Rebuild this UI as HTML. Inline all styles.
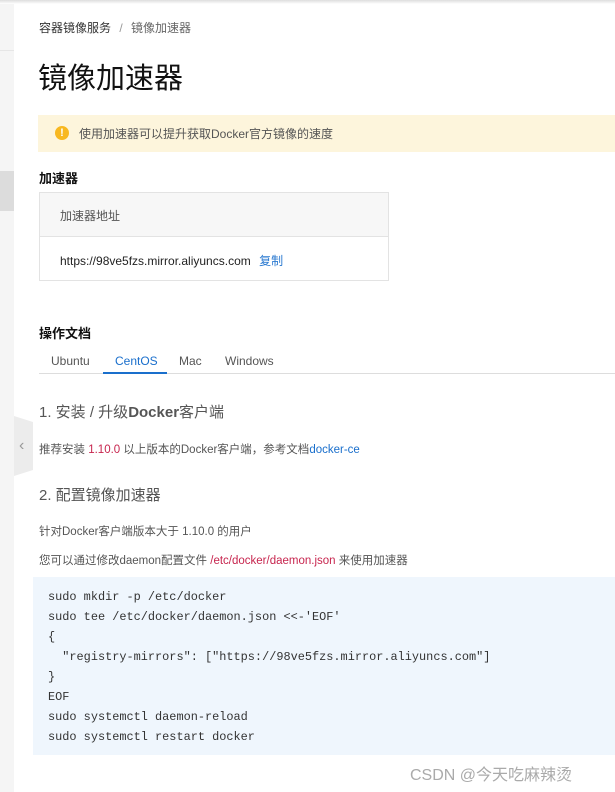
<!DOCTYPE html>
<html><head><meta charset="utf-8"><style>
*{margin:0;padding:0;box-sizing:border-box}
body{width:615px;height:792px;overflow:hidden;background:#fff;font-family:"Liberation Sans","Noto Sans CJK SC",sans-serif;color:#333;position:relative}
.a{position:absolute;white-space:nowrap}
</style></head><body>
<div class="a" style="left:0;top:0;width:14px;height:792px;background:#f5f5f5"></div>
<div class="a" style="left:0;top:50px;width:14px;height:1px;background:#e6e6e6"></div>
<div class="a" style="left:0;top:171px;width:14px;height:40px;background:#dcdcdc"></div>
<div class="a" style="left:0;top:0;width:615px;height:4px;background:linear-gradient(#ddd,#fff)"></div>
<div class="a" style="left:14px;top:416px;width:19px;height:60px;background:#ececec;clip-path:polygon(0 0,100% 10%,100% 90%,0 100%)"></div>
<div class="a" style="left:19px;top:437px;font-size:16px;color:#999">‹</div>
<div class="a" style="left:39px;top:19px;font-size:12px;color:#333">容器镜像服务 <span style="color:#999;margin:0 5px">/</span> <span style="color:#666">镜像加速器</span></div>
<div class="a" style="left:38px;top:55px;font-size:29px;color:#111">镜像加速器</div>
<div class="a" style="left:38px;top:115px;width:577px;height:37px;background:#fdf5dc"></div>
<div class="a" style="left:55px;top:126px;width:14px;height:14px;border-radius:50%;background:#f8b820;color:#fff;font-size:11px;font-weight:bold;text-align:center;line-height:14px">!</div>
<div class="a" style="left:79px;top:125px;font-size:12px;color:#555">使用加速器可以提升获取Docker官方镜像的速度</div>
<div class="a" style="left:39px;top:168px;font-size:13px;font-weight:bold;color:#111">加速器</div>
<div class="a" style="left:39px;top:192px;width:350px;height:89px;border:1px solid #e3e3e3"></div>
<div class="a" style="left:40px;top:193px;width:348px;height:44px;background:#f7f7f7;border-bottom:1px solid #e3e3e3"></div>
<div class="a" style="left:60px;top:207px;font-size:12px;color:#555">加速器地址</div>
<div class="a" style="left:60px;top:252px;font-size:12px;color:#222">https://98ve5fzs.mirror.aliyuncs.com <span style="color:#2a79d0;margin-left:5px">复制</span></div>
<div class="a" style="left:39px;top:323px;font-size:13px;font-weight:bold;color:#111">操作文档</div>
<div class="a" style="left:39px;top:373px;width:576px;height:1px;background:#ddd"></div>
<div class="a" style="left:103px;top:372px;width:64px;height:2px;background:#1a6fcc"></div>
<div class="a" style="left:51px;top:354px;font-size:12px;color:#555">Ubuntu</div>
<div class="a" style="left:115px;top:354px;font-size:12px;color:#1a6fcc">CentOS</div>
<div class="a" style="left:179px;top:354px;font-size:12px;color:#555">Mac</div>
<div class="a" style="left:225px;top:354px;font-size:12px;color:#555">Windows</div>
<div class="a" style="left:39px;top:401px;font-size:15px;color:#555">1. 安装 / 升级<b>Docker</b>客户端</div>
<div class="a" style="left:39px;top:441px;font-size:11.5px;color:#555">推荐安装 <span style="color:#c7254e">1.10.0</span> 以上版本的Docker客户端，参考文档<span style="color:#1a6fcc">docker-ce</span></div>
<div class="a" style="left:39px;top:484px;font-size:15px;color:#555">2. 配置镜像加速器</div>
<div class="a" style="left:39px;top:523px;font-size:11.5px;color:#555">针对Docker客户端版本大于 1.10.0 的用户</div>
<div class="a" style="left:39px;top:552px;font-size:11.5px;color:#555">您可以通过修改daemon配置文件 <span style="color:#c7254e">/etc/docker/daemon.json</span> 来使用加速器</div>
<div class="a" style="left:33px;top:577px;width:582px;height:178px;background:#eff6fd"></div>
<pre class="a" style="left:48px;top:587px;white-space:pre;font-family:'Liberation Mono',monospace;font-size:11.9px;line-height:20px;color:#333">sudo mkdir -p /etc/docker
sudo tee /etc/docker/daemon.json &lt;&lt;-'EOF'
{
  "registry-mirrors": ["https://98ve5fzs.mirror.aliyuncs.com"]
}
EOF
sudo systemctl daemon-reload
sudo systemctl restart docker</pre>
<div class="a" style="left:410px;top:761px;font-size:16px;color:#aaa">CSDN @今天吃麻辣烫</div>
</body></html>
